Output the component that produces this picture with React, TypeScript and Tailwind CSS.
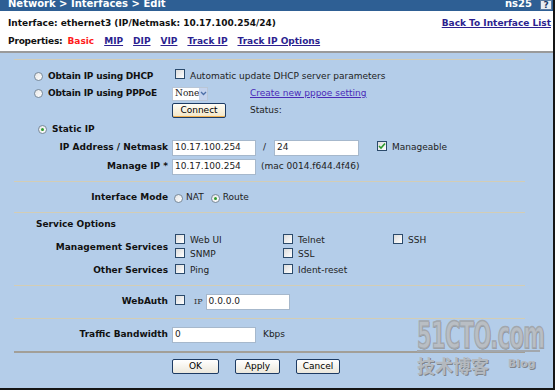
import React from "react";

const Radio = ({ checked = false }: { checked?: boolean }) => (
  <span className="inline-flex items-center justify-center w-[9px] h-[9px] rounded-full border border-[#7a8a99] bg-gradient-to-br from-[#e6e6e6] to-white shrink-0">
    {checked && <span className="block w-[3px] h-[3px] rounded-full bg-[#2f9a2f]" />}
  </span>
);

const Check = ({ checked = false }: { checked?: boolean }) => (
  <span className="inline-flex items-center justify-center w-[10px] h-[10px] border border-[#2b4a6b] bg-gradient-to-br from-[#dcdcdc] to-white shrink-0">
    {checked && (
      <svg width="8" height="8" viewBox="0 0 8 8">
        <path d="M1 4 L3 6 L7 1.5" fill="none" stroke="#2c9a2c" strokeWidth="1.6" />
      </svg>
    )}
  </span>
);

const Input = ({ value, w }: { value: string; w: string }) => (
  <div className={`${w} h-[16px] bg-white border border-[#a6b8cc] flex items-center pl-[2px] text-[9px] text-[#222]`}>
    {value}
  </div>
);

const Btn = ({ children, w }: { children: React.ReactNode; w: string }) => (
  <div className={`${w} h-[15px] rounded-[2px] border border-[#1d3b63] bg-gradient-to-b from-white to-[#ece8dc] flex items-center justify-center text-[9px] text-black`}>
    {children}
  </div>
);

const Label = ({ children }: { children: React.ReactNode }) => (
  <div className="w-[154px] text-right font-bold text-[9px] text-[#111] shrink-0">{children}</div>
);

const Sep = ({ cls = "bg-[#d3cdb5] h-[1px]", mt }: { cls?: string; mt: string }) => (
  <div className={`${mt} w-[511px] ${cls}`} />
);

const CheckItem = ({ label, w }: { label: string; w: string }) => (
  <div className={`${w} flex items-center shrink-0`}>
    <span className="ml-[3px]"><Check /></span>
    <span className="ml-[5px] text-[9px] text-[#222]">{label}</span>
  </div>
);

export default function App() {
  return (
    <div
      className="relative w-[555px] h-[390px] overflow-hidden bg-[#b4cde9] border-r-[2px] border-b-[2px] border-[#151515] flex flex-col"
      style={{ fontFamily: '"DejaVu Sans", Verdana, sans-serif' }}
    >
      {/* Top header bar */}
      <div className="h-[11px] bg-[#2e5f94] flex items-end shrink-0 overflow-hidden relative">
        <div className="pl-[8px] text-white font-bold text-[10px] leading-[10px] mb-[2px] flex-1">
          Network &gt; Interfaces &gt; Edit
        </div>
        <div className="text-white font-bold text-[10px] leading-[10px] mb-[2px] mr-[21px]">ns25</div>
        <div className="absolute right-[1px] top-0 w-[12px] h-[10px] bg-[#e8ecf2] border border-[#5a7aa0] flex items-center justify-center text-[9px] font-bold text-[#1b3a66] leading-none">
          ?
        </div>
      </div>

      {/* White info panel */}
      <div className="h-[42px] bg-white border-b-[2px] border-[#9a9a9a] shrink-0 flex flex-col text-[9px]">
        <div className="h-[21px] flex items-end justify-between px-[8px] pb-[1px]">
          <span className="font-bold text-[#111]">Interface: ethernet3 (IP/Netmask: 10.17.100.254/24)</span>
          <span className="font-bold text-[#2c1f8f] underline -mr-[6px]">Back To Interface List</span>
        </div>
        <div className="h-[20px] flex items-center px-[8px] font-bold gap-[10px]">
          <span className="text-[#111] tracking-[-0.2px]">Properties:</span>
          <span className="text-[#ff1a1a] -ml-[5px]">Basic</span>
          <span className="text-[#2c1f8f] underline">MIP</span>
          <span className="text-[#2c1f8f] underline">DIP</span>
          <span className="text-[#2c1f8f] underline">VIP</span>
          <span className="text-[#2c1f8f] underline">Track IP</span>
          <span className="text-[#2c1f8f] underline">Track IP Options</span>
        </div>
      </div>

      {/* Main form */}
      <div className="pl-[14px] flex flex-col text-[9px] text-[#111]">
        <Sep mt="mt-[6px]" />

        <div className="mt-[8px] h-[17px] flex items-center">
          <div className="w-[158px] flex items-center pl-[20px] shrink-0">
            <Radio />
            <span className="ml-[5px] font-bold tracking-[-0.2px]">Obtain IP using DHCP</span>
          </div>
          <span className="ml-[3px]"><Check /></span>
          <span className="ml-[5px] text-[#222]">Automatic update DHCP server parameters</span>
        </div>

        <div className="h-[17px] flex items-center">
          <div className="w-[158px] flex items-center pl-[20px] shrink-0">
            <Radio />
            <span className="ml-[5px] font-bold tracking-[-0.2px]">Obtain IP using PPPoE</span>
          </div>
          <div className="w-[36px] h-[14px] bg-white border border-[#b9c6d6] flex items-center justify-between shrink-0">
            <span className="pl-[2px] text-[9px] text-[#222]" style={{ fontFamily: '"DejaVu Serif", serif' }}>None</span>
            <span className="w-[11px] h-[12px] bg-[#c4d3ee] flex items-center justify-center">
              <svg width="7" height="5" viewBox="0 0 7 5"><path d="M1 1 L3.5 3.5 L6 1" fill="none" stroke="#4d6fa8" strokeWidth="1.3" /></svg>
            </span>
          </div>
          <span className="ml-[42px] text-[#4a2ab8] underline">Create new pppoe setting</span>
        </div>

        <div className="h-[17px] flex items-center">
          <div className="w-[158px] shrink-0" />
          <div className="w-[54px] h-[15px] rounded-[2px] border border-[#1d3b63] bg-gradient-to-b from-[#fffdf6] to-[#f3e6c6] shadow-[inset_0_-1px_0_#f0b050] flex items-center justify-center text-[9px] text-black shrink-0">
            Connect
          </div>
          <span className="ml-[24px] text-[#222]">Status:</span>
        </div>

        <div className="mt-[2px] h-[17px] flex items-center">
          <div className="flex items-center pl-[24px]">
            <Radio checked />
            <span className="ml-[5px] font-bold">Static IP</span>
          </div>
        </div>

        <div className="h-[19px] flex items-center">
          <Label>IP Address / Netmask</Label>
          <div className="ml-[4px] flex items-center">
            <Input value="10.17.100.254" w="w-[84px]" />
            <span className="ml-[7px] w-[11px] text-[#222]">/</span>
            <Input value="24" w="w-[85px]" />
            <span className="ml-[18px]"><Check checked /></span>
            <span className="ml-[5px] text-[#222]">Manageable</span>
          </div>
        </div>

        <div className="h-[20px] flex items-center">
          <Label>Manage IP *</Label>
          <div className="ml-[4px] flex items-center">
            <Input value="10.17.100.254" w="w-[84px]" />
            <span className="ml-[5px] text-[#222]">(mac 0014.f644.4f46)</span>
          </div>
        </div>

        <Sep mt="mt-[4px]" />

        <div className="mt-[8px] h-[16px] flex items-center">
          <Label>Interface Mode</Label>
          <div className="ml-[6px] flex items-center">
            <Radio />
            <span className="ml-[3px] text-[#222]">NAT</span>
            <span className="ml-[7px]"><Radio checked /></span>
            <span className="ml-[3px] text-[#222]">Route</span>
          </div>
        </div>

        <Sep mt="mt-[6px]" />

        <div className="mt-[4px] h-[16px] flex items-center pl-[22px] font-bold">Service Options</div>

        <div className="mt-[1px] flex items-center">
          <Label>Management Services</Label>
          <div className="ml-[4px] flex flex-col">
            <div className="h-[14px] flex items-center">
              <CheckItem label="Web UI" w="w-[108px]" />
              <CheckItem label="Telnet" w="w-[110px]" />
              <CheckItem label="SSH" w="w-[80px]" />
            </div>
            <div className="h-[14px] flex items-center">
              <CheckItem label="SNMP" w="w-[108px]" />
              <CheckItem label="SSL" w="w-[110px]" />
            </div>
          </div>
        </div>

        <div className="mt-[1px] h-[16px] flex items-center">
          <Label>Other Services</Label>
          <div className="ml-[4px] flex items-center">
            <CheckItem label="Ping" w="w-[108px]" />
            <CheckItem label="Ident-reset" w="w-[110px]" />
          </div>
        </div>

        <Sep mt="mt-[6px]" />

        <div className="mt-[8px] h-[16px] flex items-center">
          <Label>WebAuth</Label>
          <div className="ml-[4px] flex items-center">
            <span className="ml-[3px]"><Check /></span>
            <span className="ml-[9px] text-[8px] text-[#333]" style={{ fontFamily: '"DejaVu Serif", serif' }}>IP</span>
            <span className="ml-[3px]"><Input value="0.0.0.0" w="w-[84px]" /></span>
          </div>
        </div>

        <Sep mt="mt-[8px]" />

        <div className="mt-[8px] h-[16px] flex items-center">
          <Label>Traffic Bandwidth</Label>
          <div className="ml-[4px] flex items-center">
            <Input value="0" w="w-[84px]" />
            <span className="ml-[7px] text-[#222]">Kbps</span>
          </div>
        </div>

        <Sep mt="mt-[8px]" cls="bg-[#a29f98] h-[2px]" />

        <div className="mt-[6px] h-[15px] flex items-center pl-[158px]">
          <Btn w="w-[47px]">OK</Btn>
          <span className="ml-[16px]"><Btn w="w-[45px]">Apply</Btn></span>
          <span className="ml-[16px]"><Btn w="w-[44px]">Cancel</Btn></span>
        </div>
      </div>

      {/* Watermark */}
      <div className="absolute left-[417px] top-[316px] w-[130px] flex flex-col items-start pointer-events-none select-none">
        <div
          className="text-[38px] leading-[38px] font-bold text-[#b9bec4] tracking-[-1px] origin-left scale-x-[0.55] whitespace-nowrap [-webkit-text-stroke:1.5px_#a2a7ad] [text-shadow:1px_1px_0_#7f858c]"
          style={{ fontFamily: '"DejaVu Sans", sans-serif' }}
        >
          51CTO.com
        </div>
        <div className="w-[123px] h-[2px] bg-[#a2a7ad] -mt-[4px]" />
        <div className="mt-[3px] flex items-end">
          <span
            className="text-[18px] leading-[20px] font-bold text-[#b4b9bf] [text-shadow:1px_1px_0_#7f858c]"
            style={{ fontFamily: '"Noto Sans CJK SC", sans-serif' }}
          >
            技术博客
          </span>
          <span className="ml-[19px] mb-[5px] text-[11px] leading-[12px] font-bold text-[#b4b9bf] [text-shadow:1px_1px_0_#7f858c]">Blog</span>
        </div>
      </div>
    </div>
  );
}
